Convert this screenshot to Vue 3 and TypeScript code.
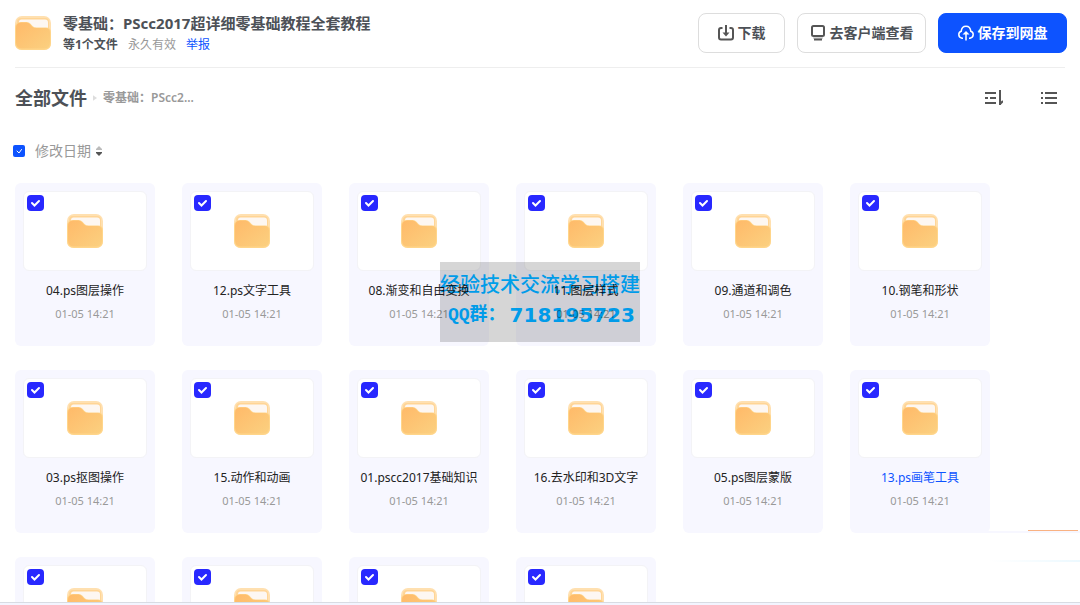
<script setup lang="ts">
import { ref } from 'vue'

interface FileItem {
  name: string
  date: string
  checked: boolean
  active?: boolean
}

const names: string[] = [
  '04.ps图层操作',
  '12.ps文字工具',
  '08.渐变和自由变换',
  '11.图层样式',
  '09.通道和调色',
  '10.钢笔和形状',
  '03.ps抠图操作',
  '15.动作和动画',
  '01.pscc2017基础知识',
  '16.去水印和3D文字',
  '05.ps图层蒙版',
  '13.ps画笔工具',
  '',
  '',
  '',
  '',
]

const files = ref<FileItem[]>(
  names.map((name) => ({
    name,
    date: name ? '01-05 14:21' : '',
    checked: true,
    active: name.startsWith('13.'),
  })),
)
const allChecked = ref(true)
</script>

<template>
  <div class="page">
    <svg class="defs" aria-hidden="true">
      <defs>
        <linearGradient id="front" x1="0" y1="0" x2="1" y2="1">
          <stop offset="0" stop-color="#ffba69" />
          <stop offset="1" stop-color="#fbd080" />
        </linearGradient>
        <symbol id="folder" viewBox="0 0 36 34">
          <rect width="36" height="34" rx="7" fill="#ffe0b0" />
          <rect x="2" y="2" width="32" height="20" rx="4" fill="#ffd596" />
          <path d="M4 6q0-2.500 2.500-2.500h23.500q3 0 3 3V13H4z" fill="#fdf7f2" />
          <path d="M0 12q0-6 6-6h5.500q2.500 0 4 1.800l2 2.200q1.500 1.500 4 1.500H31q5 0 5 5V27q0 7-7 7H7q-7 0-7-7z" fill="#ffd58a" />
          <path d="M1 12q0-5.500 5.500-5.500h5q2 0 3.500 1.700l2 2.200q1.500 1.600 4.500 1.600H30.500q4.500 0 4.500 4.500V26.500q0 6-6 6H7q-6 0-6-6z" fill="url(#front)" />
        </symbol>
      </defs>
    </svg>

    <header class="header">
      <svg class="folder"><use href="#folder" /></svg>
      <div class="info">
        <h1>零基础：PScc2017超详细零基础教程全套教程</h1>
        <p class="meta">
          <strong>等1个文件</strong><span>永久有效</span><a href="#report">举报</a>
        </p>
      </div>
      <div class="actions">
        <button type="button" class="btn download">
          <svg class="icon" viewBox="0 0 16 16" fill="none" stroke="#555" stroke-width="2">
            <path d="M4.500 3H3Q1 3 1 5v7.500q0 2 2 2h10q2 0 2-2V5q0-2-2-2h-1.500M8 0v9" />
            <path d="M4.500 7.500h7L8 11.500z" fill="#555" stroke="none" />
          </svg>
          下载
        </button>
        <button type="button" class="btn client">
          <svg class="icon" viewBox="0 0 16 16" fill="none" stroke="#555">
            <rect x="2" y="1" width="12" height="10" rx="1.500" stroke-width="2" />
            <path d="M3 13h10" stroke="#aaa" />
            <path d="M4 14.500h8" stroke-width="2" />
          </svg>
          去客户端查看
        </button>
        <button type="button" class="btn save">
          <svg class="icon" viewBox="0 0 16 16" fill="none" stroke="#fff" stroke-width="1.500">
            <path d="M5 13.200H4Q.8 12.700.8 9.600.8 7 3.200 6.300 3.700 1.200 8 1.200t4.800 5.100q2.400.7 2.400 3.300 0 3.100-3.200 3.600h-1M8 15.500V7" />
            <path d="M4.500 9.500L8 6l3.500 3.500z" fill="#fff" stroke="none" />
          </svg>
          保存到网盘
        </button>
      </div>
    </header>

    <nav class="crumbs">
      <h2>全部文件</h2>
      <svg class="sep" viewBox="0 0 5 7"><path d="M0 0l5 3.500L0 7z" fill="#ddd" /></svg>
      <span class="crumb">零基础：PScc2...</span>
      <div class="tools">
        <button type="button" class="tool" aria-label="排序">
          <svg viewBox="0 0 18 16" fill="none" stroke="#555" stroke-width="2">
            <path d="M0 3h11M0 8h3M5 8h6M0 13h11M15 0v15M15 14l3-3" />
          </svg>
        </button>
        <button type="button" class="tool" aria-label="列表">
          <svg viewBox="0 0 18 16" fill="none" stroke="#555" stroke-width="2">
            <path d="M1 3h2M5 3h12M1 8h2M5 8h12M1 13h2M5 13h12" />
          </svg>
        </button>
      </div>
    </nav>

    <div class="sort">
      <label class="check small">
        <input v-model="allChecked" type="checkbox" aria-label="全选" />
        <svg viewBox="0 0 12 12"><path d="M4 6l2 2L8.500 4.500" /></svg>
      </label>
      <button type="button" class="order">
        修改日期
        <svg class="arrows" viewBox="0 0 8 10">
          <path d="M1 4V3l3-3 3 3v1z" fill="#bbb" />
          <path d="M1 6h6v1L4 10 1 7z" fill="#555" />
        </svg>
      </button>
    </div>

    <main class="grid">
      <article v-for="(file, i) in files" :key="i" class="card" :class="{ active: file.active }">
        <div class="thumb">
          <label class="check">
            <input v-model="file.checked" type="checkbox" :aria-label="file.name || '文件夹'" />
            <svg viewBox="0 0 17 16"><path d="M5 8l2.500 2.500L12 6" /></svg>
          </label>
          <svg class="folder"><use href="#folder" /></svg>
        </div>
        <p class="name">{{ file.name }}</p>
        <p class="date">{{ file.date }}</p>
      </article>
    </main>

    <div class="promo"></div>
    <footer class="bottom"></footer>

    <aside class="watermark">
      <p class="mark-title">经验技术交流学习搭建</p>
      <p class="mark-group">QQ群：<strong>718195723</strong></p>
    </aside>
  </div>
</template>

<style>
body {
  margin: 0;
  overflow: hidden;
}
</style>

<style scoped>
.page {
  box-sizing: border-box;
  display: flex;
  flex-direction: column;
  height: 100vh;
  overflow: hidden;
  background: #fff;
  color: #4d5157;
  font: 12px/16px "Noto Sans", "Noto Sans CJK SC", sans-serif;
}
.defs {
  position: absolute;
  width: 0;
  height: 0;
}
h1, h2, p {
  margin: 0;
}
button {
  padding: 0;
  border: 0;
  background: none;
  color: inherit;
  font: inherit;
  cursor: pointer;
}
.folder {
  flex: none;
  width: 36px;
  height: 34px;
}
.header {
  flex: none;
  display: flex;
  align-items: center;
  box-sizing: border-box;
  height: 68px;
  margin: 0 15px;
  padding-bottom: 2px;
  border-bottom: 1px solid #eee;
}
.info {
  flex: 1;
  margin-left: 12px;
  white-space: nowrap;
}
h1 {
  font-size: 15px;
  line-height: 24px;
}
.meta {
  display: flex;
  gap: 10px;
  line-height: 20px;
  color: #999;
}
.meta strong {
  color: #4d5157;
}
.meta a {
  color: #0d53ff;
  text-decoration: none;
}
.actions {
  display: flex;
  gap: 12px;
  margin-right: -2px;
}
.btn {
  display: flex;
  align-items: center;
  justify-content: center;
  gap: 4px;
  box-sizing: border-box;
  width: 129px;
  height: 40px;
  border: 1px solid #ddd;
  border-radius: 8px;
  font-size: 14px;
  font-weight: 700;
  white-space: nowrap;
}
.download {
  width: 87px;
}
.save {
  border-color: #0d53ff;
  background: #0d53ff;
  color: #fff;
}
.icon {
  width: 16px;
  height: 16px;
}
.crumbs {
  flex: none;
  display: flex;
  align-items: center;
  height: 60px;
  margin: 0 22px 0 15px;
}
h2 {
  font-size: 18px;
  line-height: 24px;
}
.sep {
  width: 4px;
  height: 6px;
  margin: 0 6px;
}
.crumb {
  color: #999;
  font-weight: 600;
}
.tools {
  display: flex;
  gap: 37px;
  margin-left: auto;
}
.tool,
.tool svg {
  display: block;
  width: 18px;
  height: 16px;
}
.sort {
  flex: none;
  display: flex;
  align-items: center;
  gap: 10px;
  height: 46px;
  margin-left: 13px;
}
.order {
  display: flex;
  align-items: center;
  gap: 4px;
  color: #999;
  font-size: 14px;
}
.arrows {
  width: 8px;
  height: 10px;
}
.check {
  position: relative;
  display: block;
  width: 17px;
  height: 16px;
}
.check input {
  display: block;
  width: 100%;
  height: 100%;
  margin: 0;
  appearance: none;
  border-radius: 4px;
  background: #2828ff;
}
.check svg {
  position: absolute;
  inset: 0;
  width: 100%;
  height: 100%;
  fill: none;
  stroke: #fff;
  stroke-width: 2;
  stroke-linecap: round;
  pointer-events: none;
}
.check.small {
  width: 12px;
  height: 12px;
}
.small input {
  border-radius: 2px;
  background: #0d53ff;
}
.small svg {
  stroke-width: 1;
}
.grid {
  flex: 1;
  min-height: 0;
  display: grid;
  grid-template-columns: repeat(auto-fill, 140px);
  grid-auto-rows: max-content;
  gap: 24px 27px;
  margin: 9px 15px 0;
  overflow: hidden;
}
.card {
  box-sizing: border-box;
  height: 163px;
  padding: 8px;
  border-radius: 6px;
  background: #f7f7ff;
  color: #222;
  text-align: center;
  white-space: nowrap;
}
.thumb {
  position: relative;
  display: flex;
  align-items: center;
  justify-content: center;
  box-sizing: border-box;
  height: 80px;
  border: 1px solid #f3f3f6;
  border-radius: 6px;
  background: #fff;
}
.thumb .check {
  position: absolute;
  top: 3px;
  left: 3px;
}
.name {
  margin-top: 12px;
}
.active .name {
  color: #0d53ff;
}
.date {
  margin-top: 7px;
  color: #999;
  font-size: 11px;
}
.promo {
  position: fixed;
  right: 0;
  bottom: 43px;
  width: 180px;
  height: 32px;
  background:
    linear-gradient(#f9b282, #f9b282) right 2px top 0 / 50px 1px no-repeat,
    linear-gradient(#f7f7ff, #f7f7ff) 0 1px / 100% 2px no-repeat,
    linear-gradient(90deg, #fff, #ecf9ff) right bottom / 90px 2px no-repeat;
}
.bottom {
  flex: none;
  height: 2px;
  border-top: 1px solid #d8dce3;
  background: #f3f5ff;
}
.watermark {
  position: fixed;
  inset: 0 0 1px;
  display: flex;
  flex-direction: column;
  width: 200px;
  height: 80px;
  margin: auto;
  background: #d6d6d6;
  color: #00a0e9;
  white-space: nowrap;
  mix-blend-mode: multiply;
  pointer-events: none;
}
.mark-title {
  margin-top: 6px;
  font: 500 20px/32px "Noto Sans CJK SC", sans-serif;
}
.mark-group {
  display: flex;
  gap: 4px;
  margin-left: 8px;
  font: 700 18px/30px "Liberation Mono", "Noto Sans CJK SC", monospace;
}
.mark-group strong {
  font: 700 20px/30px "DejaVu Sans", sans-serif;
}
</style>
